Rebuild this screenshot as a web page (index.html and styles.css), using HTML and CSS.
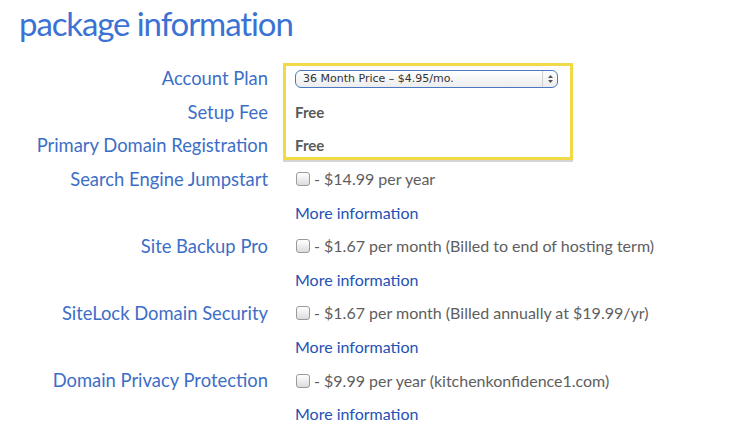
FILE: index.html
```html
<!DOCTYPE html>
<html>
<head>
<meta charset="utf-8">
<link rel="stylesheet" href="styles.css">
</head>
<body>
<h1 class="title">package information</h1>
<div class="form">
  <div class="highlight"></div>

  <div class="label r1">Account Plan</div>
  <div class="value r1">
    <div class="select">
      <span class="select-text">36 Month Price – $4.95/mo.</span>
      <span class="select-arrows">
        <svg width="7" height="10" viewBox="0 0 7 10"><path d="M3.5 1 L6 4 L1 4 Z M3.5 9 L6 6 L1 6 Z" fill="#555"/></svg>
      </span>
    </div>
  </div>

  <div class="label r2">Setup Fee</div>
  <div class="value r2 free">Free</div>

  <div class="label r3">Primary Domain Registration</div>
  <div class="value r3 free">Free</div>

  <div class="label">Search Engine Jumpstart</div>
  <div class="value"><span class="check"></span><span class="price">- $14.99 per year</span></div>
  <div class="label"></div>
  <div class="value"><a class="more">More information</a></div>

  <div class="label">Site Backup Pro</div>
  <div class="value"><span class="check"></span><span class="price">- $1.67 per month (Billed to end of hosting term)</span></div>
  <div class="label"></div>
  <div class="value"><a class="more">More information</a></div>

  <div class="label">SiteLock Domain Security</div>
  <div class="value"><span class="check"></span><span class="price">- $1.67 per month (Billed annually at $19.99/yr)</span></div>
  <div class="label"></div>
  <div class="value"><a class="more">More information</a></div>

  <div class="label">Domain Privacy Protection</div>
  <div class="value"><span class="check"></span><span class="price">- $9.99 per year (kitchenkonfidence1.com)</span></div>
  <div class="label"></div>
  <div class="value"><a class="more">More information</a></div>
</div>
</body>
</html>
```

FILE: styles.css
```css
html, body {
  margin: 0;
  padding: 0;
  background: #ffffff;
}

body {
  font-family: Lato, "Open Sans", sans-serif;
  width: 755px;
  height: 443px;
  overflow: hidden;
}

.title {
  margin: 0;
  padding: 0 0 0 19px;
  height: 61px;
  font-size: 33px;
  font-weight: 400;
  line-height: 46px;
  color: #3b72d4;
  letter-spacing: -1.1px;
}

.form {
  display: grid;
  grid-template-columns: 268px 290px;
  grid-auto-rows: 33.6px;
  column-gap: 15px;
}

.highlight {
  grid-column: 2;
  grid-row: 1 / 4;
  margin: 2px 0 2px 0;
  border: 3px solid #f1da48;
  box-shadow: 0 2px 0 #d4d4d4;
}

.r1 { grid-row: 1; }
.r2 { grid-row: 2; }
.r3 { grid-row: 3; }

.label {
  grid-column: 1;
  text-align: right;
  font-size: 18.4px;
  color: #3d6ec6;
  line-height: 33.6px;
  padding-top: 1px;
  white-space: nowrap;
}

.value {
  grid-column: 2;
  padding-left: 12px;
  display: flex;
  align-items: center;
  white-space: nowrap;
  font-size: 16px;
  color: #555;
}

.free {
  font-weight: 700;
  font-size: 15px;
  color: #5a5a5a;
  padding-top: 1px;
}

.select {
  width: 261px;
  height: 16px;
  border: 1px solid #4a78c2;
  border-radius: 6px;
  background: linear-gradient(#ffffff, #ececec);
  display: flex;
  align-items: center;
  margin-top: 2px;
}

.select-text {
  flex: 1;
  padding-left: 7px;
  font-family: "DejaVu Sans", sans-serif;
  font-size: 11px;
  color: #333;
}

.select-arrows {
  width: 14px;
  height: 16px;
  border-left: 1px solid #cfcfcf;
  display: flex;
  align-items: center;
  justify-content: center;
}

.check {
  width: 12px;
  height: 12px;
  border: 1px solid #9a9a9a;
  border-radius: 3px;
  background: linear-gradient(#ffffff, #dcdcdc);
  margin: 1px 4px 0 1px;
  flex: none;
}

.price {
  color: #5e5e5e;
}

.more {
  color: #2451b5;
  text-decoration: none;
}
```
